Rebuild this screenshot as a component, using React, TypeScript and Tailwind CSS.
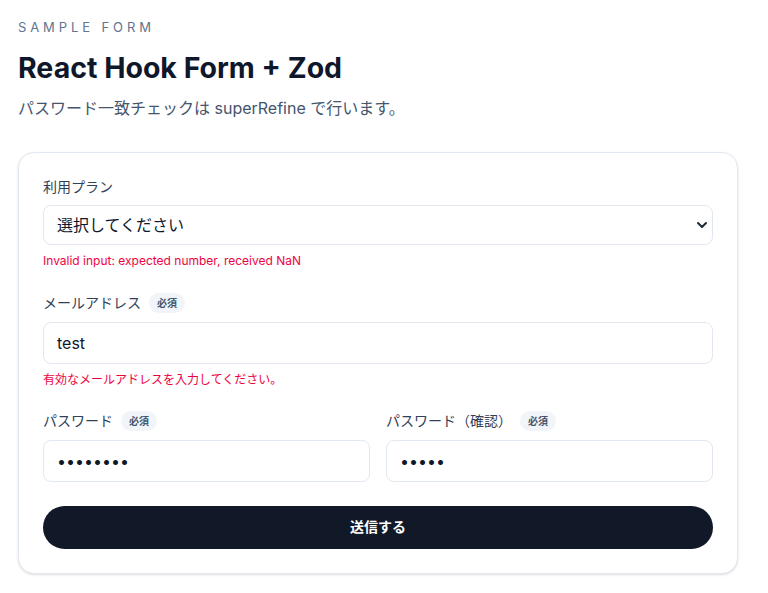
import { useState } from "react";

const font = { fontFamily: 'Inter, "Noto Sans CJK JP", sans-serif' };

const Badge = () => (
  <span className="ml-2 inline-flex h-5 items-center rounded-full bg-slate-100 px-2 text-[10px] font-bold text-slate-600">
    必須
  </span>
);

const inputCls =
  "block w-full h-[42px] rounded-lg border border-slate-200 bg-white px-[13px] text-base text-slate-900 outline-none";

export default function App() {
  const [email, setEmail] = useState("test");
  const [pw, setPw] = useState("password");
  const [pw2, setPw2] = useState("passw");

  return (
    <div className="min-h-[593px] bg-white pl-[18px] pt-[18px]" style={font}>
      <p className="text-[13px] uppercase tracking-[0.3em] text-slate-500">Sample Form</p>
      <h1 className="mt-[12px] text-[28.5px] font-bold leading-9 text-slate-900">
        React Hook Form + Zod
      </h1>
      <p className="mt-[10px] text-base text-slate-600">
        パスワード一致チェックは superRefine で行います。
      </p>

      <form
        className="mt-8 w-[720px] rounded-2xl border border-slate-200 bg-white p-6 shadow-sm"
        onSubmit={(e) => e.preventDefault()}
      >
        <div>
          <label className="block text-sm leading-5 text-slate-700">利用プラン</label>
          <div className="relative mt-2">
            <select className="block h-10 w-full appearance-none rounded-lg border border-slate-200 bg-white px-[13px] text-base text-slate-900 outline-none">
              <option>選択してください</option>
              <option>フリー</option>
              <option>プロ</option>
            </select>
            <svg
              className="pointer-events-none absolute right-[6px] top-1/2 -translate-y-1/2"
              width="10"
              height="7"
              viewBox="0 0 10 7"
              fill="none"
            >
              <path d="M1 1.5l4 4 4-4" stroke="#1f2937" strokeWidth="2" strokeLinecap="round" strokeLinejoin="round" />
            </svg>
          </div>
          <p className="mt-2 text-xs leading-4 text-rose-600">Invalid input: expected number, received NaN</p>
        </div>

        <div className="mt-6">
          <label className="flex items-center text-sm leading-5 text-slate-700">
            メールアドレス
            <Badge />
          </label>
          <input className={`${inputCls} mt-[9px]`} value={email} onChange={(e) => setEmail(e.target.value)} />
          <p className="mt-2 text-xs leading-4 text-rose-600">有効なメールアドレスを入力してください。</p>
        </div>

        <div className="mt-[23px] grid grid-cols-2 gap-4">
          <div>
            <label className="flex items-center text-sm leading-5 text-slate-700">
              パスワード
              <Badge />
            </label>
            <input type="password" className={`${inputCls} mt-[9px]`} value={pw} onChange={(e) => setPw(e.target.value)} />
          </div>
          <div>
            <label className="flex items-center text-sm leading-5 text-slate-700">
              パスワード（確認）
              <Badge />
            </label>
            <input type="password" className={`${inputCls} mt-[9px]`} value={pw2} onChange={(e) => setPw2(e.target.value)} />
          </div>
        </div>

        <button
          type="submit"
          className="mt-6 block h-[43px] w-full rounded-full bg-[#111827] text-sm font-bold text-white"
        >
          送信する
        </button>
      </form>
    </div>
  );
}
